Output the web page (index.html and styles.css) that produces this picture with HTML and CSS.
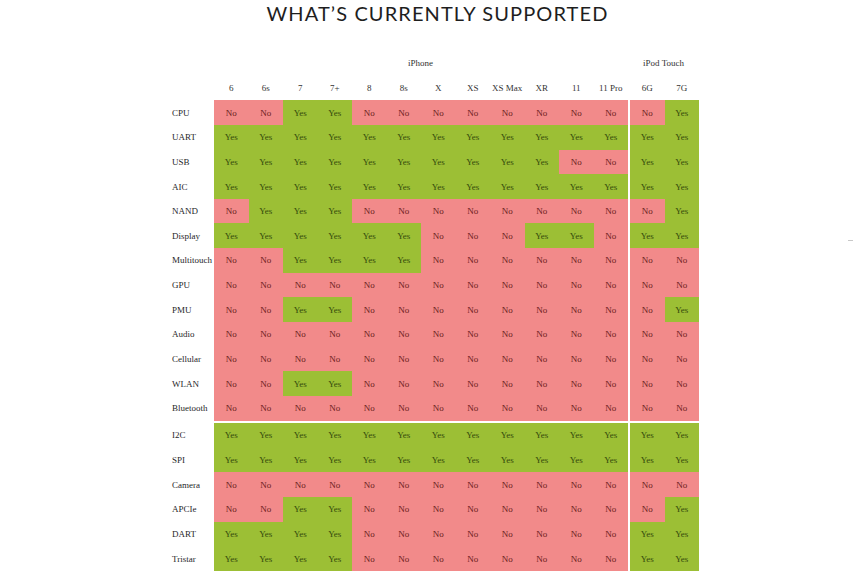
FILE: index.html
```html
<!DOCTYPE html>
<html>
<head>
<meta charset="utf-8">
<link rel="stylesheet" href="styles.css">
</head>
<body>
<h1 class="title">WHAT’S CURRENTLY SUPPORTED</h1>
<div class="table">
  <div class="row group-row">
    <div class="label"></div>
    <div class="group iphone">iPhone</div>
    <div class="sep"></div>
    <div class="group ipod">iPod Touch</div>
  </div>
  <div class="row head-row">
    <div class="label"></div>
    <div class="cell">6</div><div class="cell">6s</div><div class="cell">7</div><div class="cell">7+</div><div class="cell">8</div><div class="cell">8s</div><div class="cell">X</div><div class="cell">XS</div><div class="cell">XS Max</div><div class="cell">XR</div><div class="cell">11</div><div class="cell">11 Pro</div>
    <div class="sep"></div>
    <div class="cell">6G</div><div class="cell">7G</div>
  </div>
  <div class="body">
    <div class="row"><div class="label">CPU</div><div class="cell n">No</div><div class="cell n">No</div><div class="cell y">Yes</div><div class="cell y">Yes</div><div class="cell n">No</div><div class="cell n">No</div><div class="cell n">No</div><div class="cell n">No</div><div class="cell n">No</div><div class="cell n">No</div><div class="cell n">No</div><div class="cell n">No</div><div class="sep"></div><div class="cell n">No</div><div class="cell y">Yes</div></div>
    <div class="row"><div class="label">UART</div><div class="cell y">Yes</div><div class="cell y">Yes</div><div class="cell y">Yes</div><div class="cell y">Yes</div><div class="cell y">Yes</div><div class="cell y">Yes</div><div class="cell y">Yes</div><div class="cell y">Yes</div><div class="cell y">Yes</div><div class="cell y">Yes</div><div class="cell y">Yes</div><div class="cell y">Yes</div><div class="sep"></div><div class="cell y">Yes</div><div class="cell y">Yes</div></div>
    <div class="row"><div class="label">USB</div><div class="cell y">Yes</div><div class="cell y">Yes</div><div class="cell y">Yes</div><div class="cell y">Yes</div><div class="cell y">Yes</div><div class="cell y">Yes</div><div class="cell y">Yes</div><div class="cell y">Yes</div><div class="cell y">Yes</div><div class="cell y">Yes</div><div class="cell n">No</div><div class="cell n">No</div><div class="sep"></div><div class="cell y">Yes</div><div class="cell y">Yes</div></div>
    <div class="row"><div class="label">AIC</div><div class="cell y">Yes</div><div class="cell y">Yes</div><div class="cell y">Yes</div><div class="cell y">Yes</div><div class="cell y">Yes</div><div class="cell y">Yes</div><div class="cell y">Yes</div><div class="cell y">Yes</div><div class="cell y">Yes</div><div class="cell y">Yes</div><div class="cell y">Yes</div><div class="cell y">Yes</div><div class="sep"></div><div class="cell y">Yes</div><div class="cell y">Yes</div></div>
    <div class="row"><div class="label">NAND</div><div class="cell n">No</div><div class="cell y">Yes</div><div class="cell y">Yes</div><div class="cell y">Yes</div><div class="cell n">No</div><div class="cell n">No</div><div class="cell n">No</div><div class="cell n">No</div><div class="cell n">No</div><div class="cell n">No</div><div class="cell n">No</div><div class="cell n">No</div><div class="sep"></div><div class="cell n">No</div><div class="cell y">Yes</div></div>
    <div class="row"><div class="label">Display</div><div class="cell y">Yes</div><div class="cell y">Yes</div><div class="cell y">Yes</div><div class="cell y">Yes</div><div class="cell y">Yes</div><div class="cell y">Yes</div><div class="cell n">No</div><div class="cell n">No</div><div class="cell n">No</div><div class="cell y">Yes</div><div class="cell y">Yes</div><div class="cell n">No</div><div class="sep"></div><div class="cell y">Yes</div><div class="cell y">Yes</div></div>
    <div class="row"><div class="label">Multitouch</div><div class="cell n">No</div><div class="cell n">No</div><div class="cell y">Yes</div><div class="cell y">Yes</div><div class="cell y">Yes</div><div class="cell y">Yes</div><div class="cell n">No</div><div class="cell n">No</div><div class="cell n">No</div><div class="cell n">No</div><div class="cell n">No</div><div class="cell n">No</div><div class="sep"></div><div class="cell n">No</div><div class="cell n">No</div></div>
    <div class="row"><div class="label">GPU</div><div class="cell n">No</div><div class="cell n">No</div><div class="cell n">No</div><div class="cell n">No</div><div class="cell n">No</div><div class="cell n">No</div><div class="cell n">No</div><div class="cell n">No</div><div class="cell n">No</div><div class="cell n">No</div><div class="cell n">No</div><div class="cell n">No</div><div class="sep"></div><div class="cell n">No</div><div class="cell n">No</div></div>
    <div class="row"><div class="label">PMU</div><div class="cell n">No</div><div class="cell n">No</div><div class="cell y">Yes</div><div class="cell y">Yes</div><div class="cell n">No</div><div class="cell n">No</div><div class="cell n">No</div><div class="cell n">No</div><div class="cell n">No</div><div class="cell n">No</div><div class="cell n">No</div><div class="cell n">No</div><div class="sep"></div><div class="cell n">No</div><div class="cell y">Yes</div></div>
    <div class="row"><div class="label">Audio</div><div class="cell n">No</div><div class="cell n">No</div><div class="cell n">No</div><div class="cell n">No</div><div class="cell n">No</div><div class="cell n">No</div><div class="cell n">No</div><div class="cell n">No</div><div class="cell n">No</div><div class="cell n">No</div><div class="cell n">No</div><div class="cell n">No</div><div class="sep"></div><div class="cell n">No</div><div class="cell n">No</div></div>
    <div class="row"><div class="label">Cellular</div><div class="cell n">No</div><div class="cell n">No</div><div class="cell n">No</div><div class="cell n">No</div><div class="cell n">No</div><div class="cell n">No</div><div class="cell n">No</div><div class="cell n">No</div><div class="cell n">No</div><div class="cell n">No</div><div class="cell n">No</div><div class="cell n">No</div><div class="sep"></div><div class="cell n">No</div><div class="cell n">No</div></div>
    <div class="row"><div class="label">WLAN</div><div class="cell n">No</div><div class="cell n">No</div><div class="cell y">Yes</div><div class="cell y">Yes</div><div class="cell n">No</div><div class="cell n">No</div><div class="cell n">No</div><div class="cell n">No</div><div class="cell n">No</div><div class="cell n">No</div><div class="cell n">No</div><div class="cell n">No</div><div class="sep"></div><div class="cell n">No</div><div class="cell n">No</div></div>
    <div class="row"><div class="label">Bluetooth</div><div class="cell n">No</div><div class="cell n">No</div><div class="cell n">No</div><div class="cell n">No</div><div class="cell n">No</div><div class="cell n">No</div><div class="cell n">No</div><div class="cell n">No</div><div class="cell n">No</div><div class="cell n">No</div><div class="cell n">No</div><div class="cell n">No</div><div class="sep"></div><div class="cell n">No</div><div class="cell n">No</div></div>
    <div class="row-gap"></div>
    <div class="row"><div class="label">I2C</div><div class="cell y">Yes</div><div class="cell y">Yes</div><div class="cell y">Yes</div><div class="cell y">Yes</div><div class="cell y">Yes</div><div class="cell y">Yes</div><div class="cell y">Yes</div><div class="cell y">Yes</div><div class="cell y">Yes</div><div class="cell y">Yes</div><div class="cell y">Yes</div><div class="cell y">Yes</div><div class="sep"></div><div class="cell y">Yes</div><div class="cell y">Yes</div></div>
    <div class="row"><div class="label">SPI</div><div class="cell y">Yes</div><div class="cell y">Yes</div><div class="cell y">Yes</div><div class="cell y">Yes</div><div class="cell y">Yes</div><div class="cell y">Yes</div><div class="cell y">Yes</div><div class="cell y">Yes</div><div class="cell y">Yes</div><div class="cell y">Yes</div><div class="cell y">Yes</div><div class="cell y">Yes</div><div class="sep"></div><div class="cell y">Yes</div><div class="cell y">Yes</div></div>
    <div class="row"><div class="label">Camera</div><div class="cell n">No</div><div class="cell n">No</div><div class="cell n">No</div><div class="cell n">No</div><div class="cell n">No</div><div class="cell n">No</div><div class="cell n">No</div><div class="cell n">No</div><div class="cell n">No</div><div class="cell n">No</div><div class="cell n">No</div><div class="cell n">No</div><div class="sep"></div><div class="cell n">No</div><div class="cell n">No</div></div>
    <div class="row"><div class="label">APCIe</div><div class="cell n">No</div><div class="cell n">No</div><div class="cell y">Yes</div><div class="cell y">Yes</div><div class="cell n">No</div><div class="cell n">No</div><div class="cell n">No</div><div class="cell n">No</div><div class="cell n">No</div><div class="cell n">No</div><div class="cell n">No</div><div class="cell n">No</div><div class="sep"></div><div class="cell n">No</div><div class="cell y">Yes</div></div>
    <div class="row"><div class="label">DART</div><div class="cell y">Yes</div><div class="cell y">Yes</div><div class="cell y">Yes</div><div class="cell y">Yes</div><div class="cell n">No</div><div class="cell n">No</div><div class="cell n">No</div><div class="cell n">No</div><div class="cell n">No</div><div class="cell n">No</div><div class="cell n">No</div><div class="cell n">No</div><div class="sep"></div><div class="cell y">Yes</div><div class="cell y">Yes</div></div>
    <div class="row"><div class="label">Tristar</div><div class="cell y">Yes</div><div class="cell y">Yes</div><div class="cell y">Yes</div><div class="cell y">Yes</div><div class="cell n">No</div><div class="cell n">No</div><div class="cell n">No</div><div class="cell n">No</div><div class="cell n">No</div><div class="cell n">No</div><div class="cell n">No</div><div class="cell n">No</div><div class="sep"></div><div class="cell y">Yes</div><div class="cell y">Yes</div></div>
  </div>
</div>
<div class="edge-mark"></div>
</body>
</html>
```
FILE: styles.css
```css
html, body {
  margin: 0;
  padding: 0;
  background: #ffffff;
}
body {
  width: 853px;
  height: 579px;
  overflow: hidden;
  position: relative;
  font-family: "Liberation Serif", "DejaVu Serif", serif;
  color: #333;
}
.title {
  margin: 0;
  height: 51px;
  padding-top: 1px;
  box-sizing: border-box;
  text-align: center;
  font-family: Lato, "Open Sans", sans-serif;
  font-weight: 400;
  font-size: 20px;
  line-height: 24px;
  letter-spacing: 1.1px;
  color: #1e1e1e;
  padding-left: 22px;
}
.table {
  margin-left: 172px;
  width: 526px;
  font-size: 9px;
}
.row {
  display: flex;
  height: 24.65px;
  align-items: stretch;
}
.label {
  width: 42px;
  flex: none;
  display: flex;
  align-items: center;
  font-size: 9px;
  color: #1f1f2a;
  white-space: nowrap;
}
.cell {
  width: 34.5px;
  flex: none;
  display: flex;
  align-items: center;
  justify-content: center;
  white-space: nowrap;
}
.head-row .cell, .group {
  color: #333;
  font-size: 9px;
}
.group {
  display: flex;
  align-items: center;
  justify-content: center;
}
.iphone { width: 414px; }
.ipod { width: 69px; }
.sep {
  width: 2px;
  flex: none;
  background: #fff;
}
.row-gap {
  height: 2.5px;
}
.y {
  background: #9cbf35;
  color: #354a0c;
}
.n {
  background: #f28a8a;
  color: #6a2020;
}
.edge-mark {
  position: absolute;
  right: 0;
  top: 240px;
  width: 5px;
  height: 1px;
  background: #c8c8c8;
}
```
